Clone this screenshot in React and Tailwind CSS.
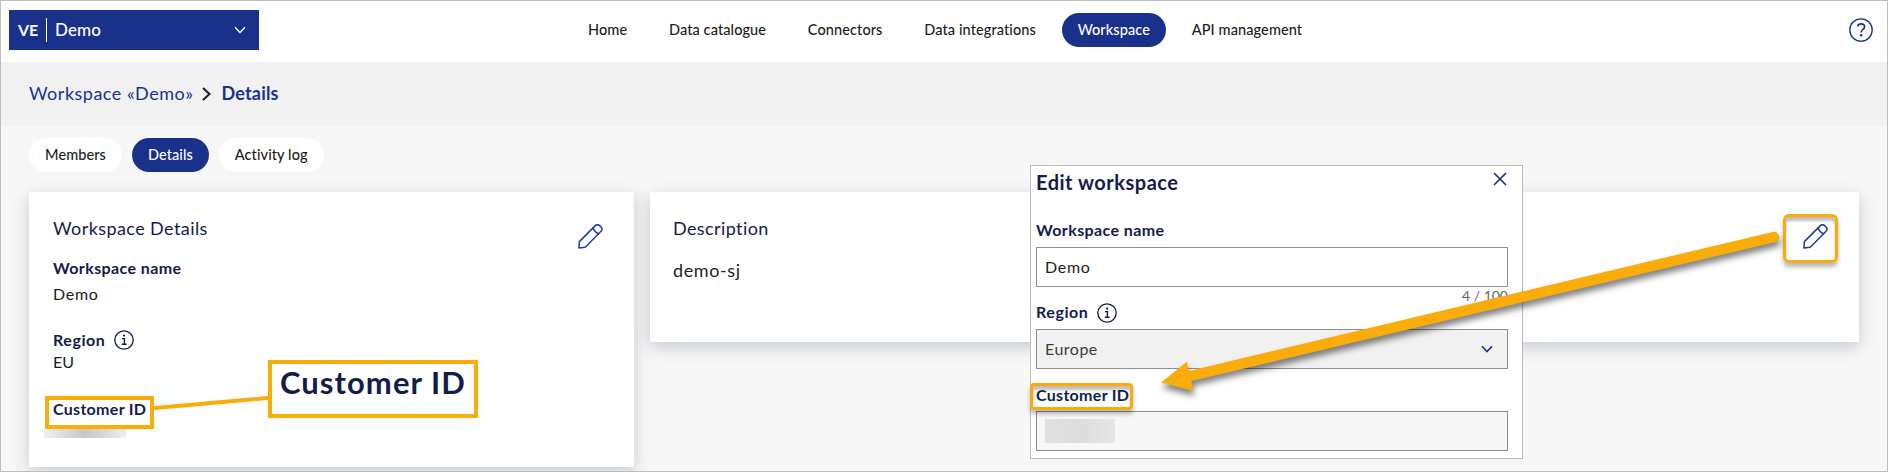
function Pencil({ className }) {
  return (
    <svg viewBox="0 0 25 25" className={className} fill="none" stroke="#1f3a93" strokeWidth="1.5" strokeLinejoin="round" strokeLinecap="round">
      <path d="M0.9 24 1.4 17.6 17.3 1.6Q19.3-0.1 21.4 1.4L23.3 3.3Q24.9 5.4 23.1 7.2L7.2 23.2 0.9 24Z" />
      <path d="M15.2 3.8Q16 7.6 20.6 9.7" />
    </svg>
  );
}

function Info({ className }) {
  return (
    <svg viewBox="0 0 20 20" className={className} fill="none" stroke="#141c4d">
      <circle cx="10" cy="10" r="9.2" strokeWidth="1.3" />
      <path d="M8 8.6H10.4V14M7.8 14.2H12.6" strokeWidth="1.4" />
      <circle cx="10.1" cy="5.6" r="1.15" fill="#141c4d" stroke="none" />
    </svg>
  );
}

function Chevron({ className, color = "#1a318c", width = 1.6 }) {
  return (
    <svg viewBox="0 0 12 8" className={className} fill="none" stroke={color} strokeWidth={width}>
      <path d="M1 1.3 6 6.5 11 1.3" />
    </svg>
  );
}

const nav = ["Home", "Data catalogue", "Connectors", "Data integrations", "Workspace", "API management"];
const tabs = ["Members", "Details", "Activity log"];

function Header() {
  return (
    <header className="flex h-[61px] items-start bg-white pl-2 pr-[14px]">
      <button className="mt-[9px] flex h-10 w-[250px] shrink-0 items-center bg-[#1a318c] pl-[9px] pr-[13px] text-white">
        <span className="w-7 text-left text-base font-bold">VE</span>
        <span className="h-6 w-px bg-white" />
        <span className="ml-2 text-[17px] font-medium tracking-[0.1px]">Demo</span>
        <Chevron className="ml-auto h-2 w-3" color="#fff" width={1.3} />
      </button>
      <nav className="ml-[313px] mt-3 flex gap-[9.75px] text-[14.5px] font-medium tracking-[0.1px] text-[#1d1d1b]">
        {nav.map((n) => (
          <a key={n} className={n === "Workspace" ? "flex h-[34px] items-center whitespace-nowrap rounded-full bg-[#1a318c] px-4 text-white" : "flex h-[34px] items-center whitespace-nowrap px-4"}>
            {n}
          </a>
        ))}
      </nav>
      <svg viewBox="0 0 24 24" className="ml-auto mt-[17px] size-6" fill="none" stroke="#1a318c">
        <circle cx="12" cy="12" r="11.2" strokeWidth="1.3" />
        <path d="M8.6 8.3Q9 5.9 12 5.9 15.6 5.9 15.6 8.8 15.6 10.4 13.8 11.6 12.1 12.8 12.1 14.6" strokeWidth="1.6" />
        <circle cx="12.1" cy="17.2" r="1.2" fill="#1a318c" stroke="none" />
      </svg>
    </header>
  );
}

function Dialog() {
  return (
    <section className="absolute left-[1030px] top-[165px] h-[294px] w-[493px] border border-[#bdbdbd] bg-white pl-[5px] pr-[14px] pt-1 text-base leading-6 text-[#141c4d]">
      <div className="flex justify-between">
        <h2 className="text-xl leading-6 font-bold tracking-[0.5px]">Edit workspace</h2>
        <svg viewBox="0 0 14 14" className="mr-px mt-0.5 size-[14px]" stroke="#1a318c" strokeWidth="1.7">
          <path d="M1 1 13 13M13 1 1 13" />
        </svg>
      </div>
      <div className="mt-6 font-bold tracking-[0.4px]">Workspace name</div>
      <div className="mt-[5px] flex h-10 items-center border border-[#8f8f8f] pl-2 tracking-[0.7px] text-[#1d1d1b]">Demo</div>
      <div className="h-[15px] text-right text-[14px] leading-[17px] text-[#666]">4 / 100</div>
      <div className="flex items-center gap-[9px]">
        <span className="-mt-0.5 font-bold tracking-[0.55px]">Region</span>
        <Info className="size-5" />
      </div>
      <div className="mt-[5px] flex h-10 items-center justify-between border border-[#8f8f8f] bg-[#f1f1f1] pl-2 pr-[14px] tracking-[0.5px] text-[#3c3c3b]">
        <span>Europe</span>
        <Chevron className="h-2 w-3" />
      </div>
      <div className="mt-[14px] font-bold tracking-[0.3px]">Customer ID</div>
      <div className="mt-1 flex h-10 items-start border border-[#8f8f8f] bg-[#f7f7f7] pl-2 pt-[7px]">
        <div className="h-6 w-[70px] bg-gradient-to-r from-[#e2e0df] via-[#dcdcdc] to-[#e6e6e6]" />
      </div>
    </section>
  );
}

export default function App() {
  return (
    <div className="relative h-[472px] w-[1888px] overflow-hidden border border-[#bdbdbd] bg-[#f7f7f7] font-['Lato',sans-serif]">
      <Header />
      <div className="flex h-16 items-center bg-[#f1f1f1] pb-[2px] pl-7 text-lg text-[#1a318c]">
        <span className="tracking-[0.5px]">Workspace «Demo»</span>
        <svg viewBox="0 0 9 14" className="ml-[9px] mr-[10px] mt-0.5 h-[14px] w-[9px]" fill="none" stroke="#1d1d1b" strokeWidth="2">
          <path d="M1 1 7.5 7 1 13" />
        </svg>
        <span className="font-bold tracking-[0.2px]">Details</span>
      </div>
      <div className="flex gap-[10px] pl-7 pt-3 text-[14.5px] font-medium tracking-[0.08px] text-[#1d1d1b]">
        {tabs.map((t) => (
          <a key={t} className={t === "Details" ? "flex h-[34px] items-center rounded-full bg-[#1a318c] px-4 text-white" : "flex h-[34px] items-center rounded-full bg-white px-4"}>
            {t}
          </a>
        ))}
      </div>
      <main className="mt-5 flex items-start gap-4 pl-7 pr-7 text-base leading-6 text-[#141c4d]">
        <section className="flex h-[275px] w-[605px] justify-between bg-white pl-6 pr-[31px] pt-6 shadow-[0_5px_16px_rgba(25,45,75,0.22)]">
          <div>
            <h3 className="text-lg leading-6 tracking-[0.42px]">Workspace Details</h3>
            <div className="mt-4 font-bold tracking-[0.4px]">Workspace name</div>
            <div className="mt-[2px] tracking-[0.7px] text-[#1d1d1b]">Demo</div>
            <div className="mt-[23px] flex h-[22px] items-center gap-[9px]">
              <span className="font-bold tracking-[0.55px]">Region</span>
              <Info className="size-5" />
            </div>
            <div className="leading-[22px] text-[#1d1d1b]">EU</div>
            <div className="mt-6 font-bold tracking-[0.3px]">Customer ID</div>
          </div>
          <Pencil className="mt-2 size-[25px]" />
        </section>
        <section className="flex h-[150px] w-[1209px] justify-between bg-white pl-[23px] pr-[31px] pt-6 shadow-[0_5px_16px_rgba(25,45,75,0.22)]">
          <div className="text-lg leading-6">
            <h3 className="tracking-[0.4px]">Description</h3>
            <p className="mt-[18px] tracking-[0.6px] text-[#1d1d1b]">demo-sj</p>
          </div>
          <Pencil className="mt-2 size-[25px]" />
        </section>
      </main>

      <div className="absolute -left-px -top-px h-[472px] w-[1888px]">
        <Dialog />
        <div className="absolute left-[44px] top-[428px] h-[10px] w-[83px] bg-gradient-to-r from-[#f0f0f0] via-[#c6c6c6] to-[#f0f0f0]" />
        <div className="absolute left-[1783px] top-[214px] h-[49px] w-[55px] rounded-[6px] border-[3px] border-[#f9ac0a] shadow-[0_4px_4px_rgba(0,0,0,0.28),inset_0_4px_3px_rgba(0,0,0,0.25)]" />
        <div className="absolute left-[1030px] top-[383px] h-[27px] w-[103px] rounded-[4px] border-[3px] border-[#f9ac0a] shadow-[0_4px_4px_rgba(0,0,0,0.28),inset_0_4px_3px_rgba(0,0,0,0.25)]" />
        <svg viewBox="0 0 1888 472" className="absolute left-0 top-0 h-[472px] w-[1888px] drop-shadow-[1px_5px_3px_rgba(0,0,0,0.5)]">
          <path d="M1774 237 1186 377" stroke="#f9ac0a" strokeWidth="10.5" strokeLinecap="round" />
          <path d="M1161 382.7 1187 361.5 1193.5 391Z" fill="#f9ac0a" />
        </svg>
        <svg viewBox="0 0 1888 472" className="absolute left-0 top-0 h-[472px] w-[1888px]">
          <path d="M152 408.2 270 397.8" stroke="#f9ac0a" strokeWidth="4" />
        </svg>
        <div className="absolute left-[45px] top-[396px] h-[33px] w-[109px] border-4 border-[#f9ac0a]" />
        <div className="absolute left-[268px] top-[360px] h-[58px] w-[210px] border-4 border-[#f9ac0a] bg-white pl-2 pt-[2px] text-[31px] leading-8 font-bold tracking-[1.05px] whitespace-nowrap text-[#141c4d]">
          Customer ID
        </div>
      </div>
    </div>
  );
}
